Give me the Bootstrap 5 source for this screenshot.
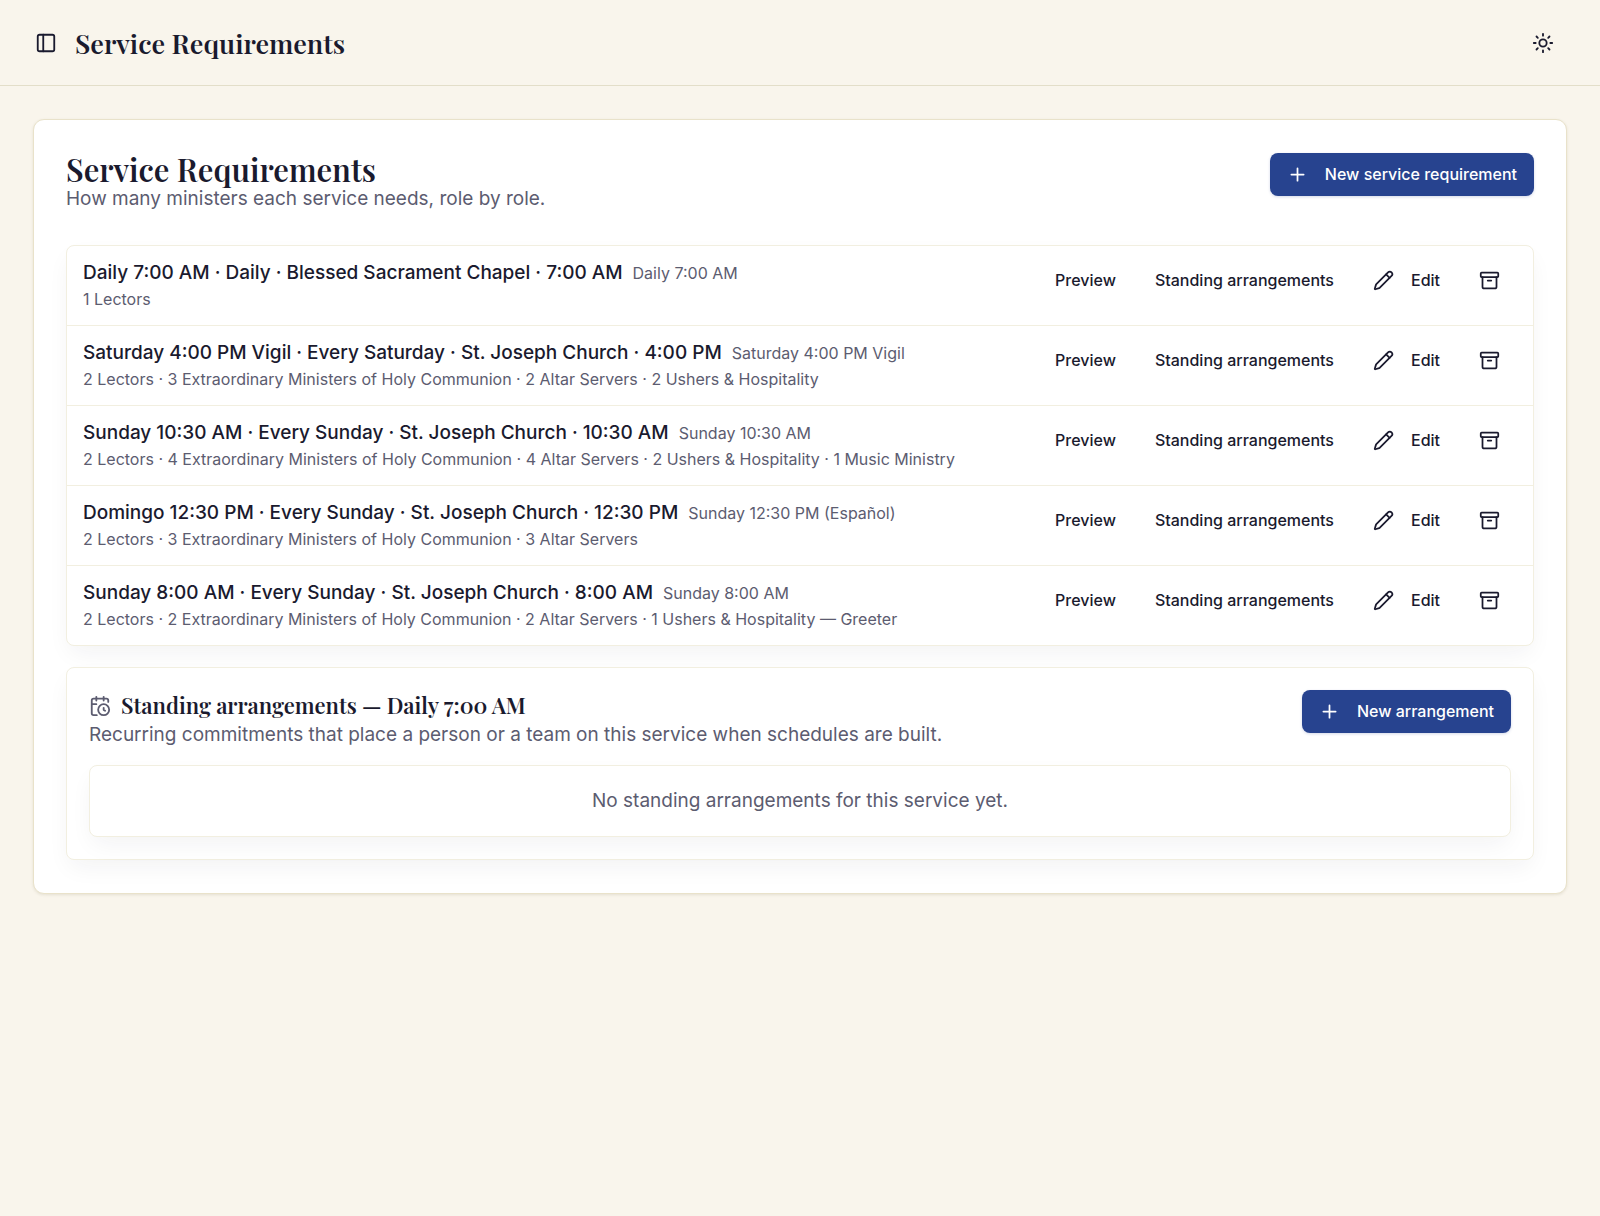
<!DOCTYPE html>
<html lang="en">
<head>
<meta charset="utf-8">
<meta name="viewport" content="width=device-width, initial-scale=1">
<title>Service Requirements</title>
<link href="https://cdn.jsdelivr.net/npm/bootstrap@5.3.0/dist/css/bootstrap.min.css" rel="stylesheet">
<style>
  :root { --ink: #1a1a2e; --soft: #5c5c70; --royal: #27438f; --cream: #f9f5ec; --line: #e9e2ca; --line-soft: #f2efe0; }
  body { background: var(--cream); color: var(--ink); font-family: Inter, "Liberation Sans", sans-serif; font-size: 19px; line-height: 28px; }
  h1, h2, h3 { font-family: "Playfair Display", "Liberation Serif", serif; font-weight: 600; color: var(--ink); margin: 0; }
  svg.ico { width: 22px; height: 22px; fill: none; stroke: currentColor; stroke-width: 2; stroke-linecap: round; stroke-linejoin: round; flex: none; display: block; }
  .topbar { height: 86px; padding: 0 34px; border-bottom: 1px solid #e3dec9; }
  .topbar h1 { font-size: 27px; line-height: 40px; }
  .topbar-lead { gap: 17px; }
  .btn-bare { padding: 0; border: 0; color: var(--ink); }
  .bar-toggle { padding: 1px; }
  .bar-theme { padding: 12px; }
  .page-main { padding: 33px; }
  .sheet { background: #fff; border: 1px solid var(--line); border-radius: 11px; padding: 33px 32px; box-shadow: 0 1px 3px rgba(90, 80, 40, .12); }
  .sheet-title { font-size: 31px; line-height: 32px; }
  .sheet-head { margin-bottom: 32px; }
  .soft { color: var(--soft); }
  .btn-act { font-size: 16px; line-height: 25px; font-weight: 500; padding: 9px 17px; border: 0; border-radius: 8px; color: var(--ink); display: inline-flex; align-items: center; gap: 17px; }
  .btn-act svg { width: 21px; height: 21px; }
  .btn-royal, .btn-royal:hover { background: var(--royal); color: #fff; box-shadow: 0 1px 3px rgba(39, 67, 143, .2); }
  .raised { background: #fff; border: 1px solid var(--line-soft); border-radius: 8px; box-shadow: 0 10px 24px -4px rgba(26, 26, 46, .06); }
  .svc { background: transparent; color: var(--ink); border: 0; border-bottom: 1px solid var(--line-soft); padding: 13px 16px; }
  .svc:last-child { border-bottom: 0; }
  .svc-name { font-weight: 500; line-height: 27px; }
  .note { font-size: 16px; line-height: 26px; color: var(--soft); }
  .acts { gap: 5px; }
  .name-gap { column-gap: 10px; }
  .panel { margin-top: 21px; padding: 22px; }
  .panel h3 { font-size: 22px; line-height: 31px; }
  .panel-gap { gap: 10px; }
  .none-yet { margin-top: 16px; padding: 21px; text-align: center; }
</style>
<script src="https://cdn.jsdelivr.net/npm/bootstrap@5.3.0/dist/js/bootstrap.bundle.min.js" defer></script>
</head>
<body>
<svg class="d-none" aria-hidden="true">
  <symbol id="i-plus" viewBox="0 0 24 24"><path d="M5 12h14M12 5v14"/></symbol>
  <symbol id="i-pencil" viewBox="0 0 24 24"><path d="M21.174 6.812a1 1 0 0 0-3.986-3.987L3.842 16.174a2 2 0 0 0-.5.83l-1.321 4.352a.5.5 0 0 0 .623.622l4.353-1.32a2 2 0 0 0 .83-.497z"/><path d="m15 5 4 4"/></symbol>
  <symbol id="i-archive" viewBox="0 0 24 24"><rect width="20" height="5" x="2" y="3" rx="1"/><path d="M4 8v11a2 2 0 0 0 2 2h12a2 2 0 0 0 2-2V8M10 12h4"/></symbol>
</svg>

<header class="topbar d-flex align-items-center justify-content-between">
  <div class="topbar-lead d-flex align-items-center">
    <button type="button" class="btn btn-bare bar-toggle" aria-label="Toggle sidebar"><svg class="ico" viewBox="0 0 24 24"><rect width="18" height="18" x="3" y="3" rx="2"/><path d="M9 3v18"/></svg></button>
    <h1>Service Requirements</h1>
  </div>
  <button type="button" class="btn btn-bare bar-theme" aria-label="Toggle theme"><svg class="ico" viewBox="0 0 24 24"><circle cx="12" cy="12" r="4"/><path d="M12 2v2M12 20v2M4.93 4.93l1.41 1.41M17.66 17.66l1.41 1.41M2 12h2M20 12h2M6.34 17.66l-1.41 1.41M19.07 4.93l-1.41 1.41"/></svg></button>
</header>

<main class="page-main">
  <section class="sheet">
    <div class="sheet-head d-flex justify-content-between align-items-start gap-3">
      <div>
        <h2 class="sheet-title">Service Requirements</h2>
        <p class="soft mb-0">How many ministers each service needs, role by role.</p>
      </div>
      <button type="button" class="btn btn-act btn-royal"><svg class="ico"><use href="#i-plus"/></svg>New service requirement</button>
    </div>

    <ul class="list-group raised">
      <li class="list-group-item svc d-flex justify-content-between align-items-start gap-3">
        <div>
          <div class="d-flex flex-wrap align-items-center name-gap"><span class="svc-name">Daily 7:00 AM · Daily · Blessed Sacrament Chapel · 7:00 AM</span><span class="note">Daily 7:00 AM</span></div>
          <div class="note">1 Lectors</div>
        </div>
        <div class="acts d-flex flex-shrink-0">
          <button type="button" class="btn btn-act">Preview</button>
          <button type="button" class="btn btn-act">Standing arrangements</button>
          <button type="button" class="btn btn-act"><svg class="ico"><use href="#i-pencil"/></svg>Edit</button>
          <button type="button" class="btn btn-act" aria-label="Archive"><svg class="ico"><use href="#i-archive"/></svg></button>
        </div>
      </li>
      <li class="list-group-item svc d-flex justify-content-between align-items-start gap-3">
        <div>
          <div class="d-flex flex-wrap align-items-center name-gap"><span class="svc-name">Saturday 4:00 PM Vigil · Every Saturday · St. Joseph Church · 4:00 PM</span><span class="note">Saturday 4:00 PM Vigil</span></div>
          <div class="note">2 Lectors · 3 Extraordinary Ministers of Holy Communion · 2 Altar Servers · 2 Ushers &amp; Hospitality</div>
        </div>
        <div class="acts d-flex flex-shrink-0">
          <button type="button" class="btn btn-act">Preview</button>
          <button type="button" class="btn btn-act">Standing arrangements</button>
          <button type="button" class="btn btn-act"><svg class="ico"><use href="#i-pencil"/></svg>Edit</button>
          <button type="button" class="btn btn-act" aria-label="Archive"><svg class="ico"><use href="#i-archive"/></svg></button>
        </div>
      </li>
      <li class="list-group-item svc d-flex justify-content-between align-items-start gap-3">
        <div>
          <div class="d-flex flex-wrap align-items-center name-gap"><span class="svc-name">Sunday 10:30 AM · Every Sunday · St. Joseph Church · 10:30 AM</span><span class="note">Sunday 10:30 AM</span></div>
          <div class="note">2 Lectors · 4 Extraordinary Ministers of Holy Communion · 4 Altar Servers · 2 Ushers &amp; Hospitality · 1 Music Ministry</div>
        </div>
        <div class="acts d-flex flex-shrink-0">
          <button type="button" class="btn btn-act">Preview</button>
          <button type="button" class="btn btn-act">Standing arrangements</button>
          <button type="button" class="btn btn-act"><svg class="ico"><use href="#i-pencil"/></svg>Edit</button>
          <button type="button" class="btn btn-act" aria-label="Archive"><svg class="ico"><use href="#i-archive"/></svg></button>
        </div>
      </li>
      <li class="list-group-item svc d-flex justify-content-between align-items-start gap-3">
        <div>
          <div class="d-flex flex-wrap align-items-center name-gap"><span class="svc-name">Domingo 12:30 PM · Every Sunday · St. Joseph Church · 12:30 PM</span><span class="note">Sunday 12:30 PM (Español)</span></div>
          <div class="note">2 Lectors · 3 Extraordinary Ministers of Holy Communion · 3 Altar Servers</div>
        </div>
        <div class="acts d-flex flex-shrink-0">
          <button type="button" class="btn btn-act">Preview</button>
          <button type="button" class="btn btn-act">Standing arrangements</button>
          <button type="button" class="btn btn-act"><svg class="ico"><use href="#i-pencil"/></svg>Edit</button>
          <button type="button" class="btn btn-act" aria-label="Archive"><svg class="ico"><use href="#i-archive"/></svg></button>
        </div>
      </li>
      <li class="list-group-item svc d-flex justify-content-between align-items-start gap-3">
        <div>
          <div class="d-flex flex-wrap align-items-center name-gap"><span class="svc-name">Sunday 8:00 AM · Every Sunday · St. Joseph Church · 8:00 AM</span><span class="note">Sunday 8:00 AM</span></div>
          <div class="note">2 Lectors · 2 Extraordinary Ministers of Holy Communion · 2 Altar Servers · 1 Ushers &amp; Hospitality — Greeter</div>
        </div>
        <div class="acts d-flex flex-shrink-0">
          <button type="button" class="btn btn-act">Preview</button>
          <button type="button" class="btn btn-act">Standing arrangements</button>
          <button type="button" class="btn btn-act"><svg class="ico"><use href="#i-pencil"/></svg>Edit</button>
          <button type="button" class="btn btn-act" aria-label="Archive"><svg class="ico"><use href="#i-archive"/></svg></button>
        </div>
      </li>
    </ul>

    <section class="raised panel">
      <div class="d-flex justify-content-between align-items-start gap-3">
        <div>
          <div class="d-flex align-items-center panel-gap">
            <svg class="ico soft" viewBox="0 0 24 24" aria-hidden="true"><path d="M16 14v2.2l1.6 1M16 2v4M21 7.5V6a2 2 0 0 0-2-2H5a2 2 0 0 0-2 2v14a2 2 0 0 0 2 2h3.5M3 10h5M8 2v4"/><circle cx="16" cy="16" r="6"/></svg>
            <h3>Standing arrangements — Daily 7:00 AM</h3>
          </div>
          <p class="soft mb-0">Recurring commitments that place a person or a team on this service when schedules are built.</p>
        </div>
        <button type="button" class="btn btn-act btn-royal"><svg class="ico"><use href="#i-plus"/></svg>New arrangement</button>
      </div>
      <div class="raised none-yet soft">No standing arrangements for this service yet.</div>
    </section>
  </section>
</main>
</body>
</html>
